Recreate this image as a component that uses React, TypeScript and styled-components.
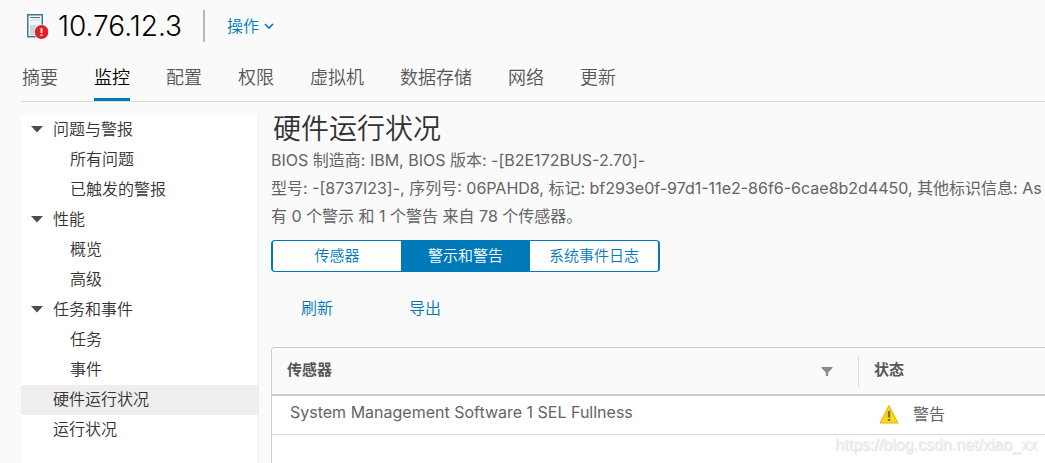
import React from "react";
import styled, { createGlobalStyle } from "styled-components";

const GlobalStyle = createGlobalStyle`
  * { box-sizing: border-box; }
  html, body { margin: 0; background: #fafafa; }
  body {
    color: #565656;
    font-family: Inter, "Noto Sans CJK SC", sans-serif;
    font-weight: 350;
    font-size: 16px;
    line-height: 24px;
    overflow: hidden;
  }
  button { font: inherit; cursor: pointer; }
`;

const Page = styled.div`
  position: relative;
  display: flex;
  flex-direction: column;
  height: 100vh;
  overflow: hidden;
  padding-left: 21px;
`;

const Header = styled.header`
  display: flex;
  align-items: center;
  height: 52px;
  padding-left: 5px;
`;

const HostName = styled.h1`
  margin: 0 21px 0 8px;
  color: #000;
  font-size: 28px;
  font-weight: 300;
  line-height: 36px;
`;

const ActionsButton = styled.button`
  display: flex;
  align-items: center;
  gap: 5px;
  height: 32px;
  padding: 0 0 0 22px;
  border: 0;
  border-left: 2px solid #b8b8b8;
  background: none;
  color: #0079b8;
`;

const TabBar = styled.nav`
  display: flex;
  flex-shrink: 0;
  gap: 36px;
  height: 50px;
  padding-left: 1px;
  border-bottom: 1px solid #dcdcdc;
`;

const Tab = styled.a<{ $active?: boolean }>`
  padding-top: 14px;
  color: ${(p) => (p.$active ? "#000" : "#565656")};
  box-shadow: ${(p) => (p.$active ? "inset 0 -3px #0079b8" : "none")};
  font-size: 18px;
  text-decoration: none;
  white-space: nowrap;
`;

const Body = styled.div`
  display: flex;
  flex: 1;
  min-height: 0;
  padding-top: 13px;
`;

const Sidebar = styled.nav`
  flex: 0 0 238px;
  border-right: 1px solid #eee;
  background: #fff;
`;

const List = styled.ul`
  margin: 0;
  padding: 0;
  list-style: none;
`;

const NavLink = styled.a<{ $level: number; $active?: boolean }>`
  display: flex;
  align-items: center;
  height: 30px;
  padding-bottom: 2px;
  padding-left: ${(p) => (p.$level === 2 ? 49 : 32)}px;
  background: ${(p) => (p.$active ? "#eee" : "none")};
  color: #333;
  text-decoration: none;
`;

const GroupToggle = styled.button`
  display: flex;
  align-items: center;
  gap: 10px;
  width: 100%;
  height: 30px;
  padding: 0 0 2px 10px;
  border: 0;
  background: none;
  color: #333;
`;

const Main = styled.main`
  display: flex;
  flex: 1;
  flex-direction: column;
  min-width: 0;
  padding-left: 12px;
`;

const Title = styled.h2`
  margin: 0 0 3px 2px;
  color: #313131;
  font-size: 28px;
  font-weight: 350;
  line-height: 28px;
`;

const Info = styled.p`
  margin: 0;
  color: #646464;
  font-size: 16px;
  font-weight: 400;
  line-height: 28px;
  white-space: nowrap;
`;

const Segments = styled.div`
  display: flex;
  flex-shrink: 0;
  width: 389px;
  height: 32px;
  margin-top: 10px;
  overflow: hidden;
  border: 1px solid #0079b8;
  border-width: 1px 2px;
  border-radius: 4px;
`;

const Segment = styled.button<{ $active?: boolean }>`
  flex: ${(p) => (p.$active ? "0 0 129px" : "1")};
  padding: 0;
  border: 0;
  background: ${(p) => (p.$active ? "#0079b8" : "#fff")};
  color: ${(p) => (p.$active ? "#fff" : "#0079b8")};
  font-size: 15px;
`;

const Toolbar = styled.div`
  display: flex;
  gap: 16px;
  padding: 24px 0 27px;
`;

const ToolButton = styled.button`
  padding: 0 30px;
  border: 0;
  background: none;
  color: #0079b8;
`;

const Grid = styled.div`
  flex: 1;
  border: 1px solid #ccc;
  border-width: 1px 0 0 1px;
  border-radius: 4px 0 0 0;
  background: #fff;
  overflow: hidden;
`;

const Table = styled.table`
  width: 100%;
  border-collapse: collapse;
  table-layout: fixed;
`;

const HeadCell = styled.th`
  height: 47px;
  padding: 0;
  border-bottom: 2px solid #ccc;
  background: #fafafa;
  font-size: 15px;
  font-weight: 700;
  text-align: left;

  &:first-child { width: 587px; }
`;

const HeadContent = styled.div<{ $divided?: boolean }>`
  display: flex;
  align-items: center;
  justify-content: space-between;
  height: 31px;
  padding: 0 25px 2px 15px;
  border-right: ${(p) => (p.$divided ? "1px solid #dcdcdc" : "0")};
`;

const FilterButton = styled.button`
  display: flex;
  padding: 3px 0 0;
  border: 0;
  background: none;
`;

const Cell = styled.td`
  height: 39px;
  padding: 0 18px 5px;
  border-bottom: 1px solid #dcdcdc;
  color: #646464;
  font-weight: 400;
`;

const Status = styled.span`
  display: flex;
  align-items: center;
  gap: 14px;
  padding: 3px 0 0 2px;
`;

const Watermark = styled.span`
  position: absolute;
  right: 8px;
  bottom: 6px;
  color: #f0f0f0;
  font-family: "Liberation Sans", sans-serif;
  font-size: 16px;
  font-weight: 400;
  line-height: 24px;
  text-shadow: 1px 1px 1px #dcdcdc;
`;

const HostIcon = () => (
  <svg width="24" height="28" viewBox="0 0 24 28" aria-hidden="true">
    <rect x="1.75" y="2.75" width="14.5" height="22" fill="#f3f7f8" stroke="#46788a" strokeWidth="1.5" />
    <path d="M4 5.5h10" stroke="#46788a" strokeWidth="1" />
    <path d="M4 8h10" stroke="#c9d9df" strokeWidth="1" />
    <path d="M4 13h6v10.500H4z" fill="#c9d9df" />
    <circle cx="15.5" cy="20" r="7.6" fill="#fff" />
    <circle cx="15.5" cy="20" r="6.9" fill="#e61e27" />
    <path d="M15.5 16v5M15.5 22.300v1.700" stroke="#fff" strokeWidth="1.8" />
  </svg>
);

const Chevron = () => (
  <svg width="10" height="8" viewBox="0 0 10 8" fill="none" aria-hidden="true">
    <path d="M1 2l4 4 4-4" stroke="#0079b8" strokeWidth="1.6" />
  </svg>
);

const Caret = () => (
  <svg width="12" height="8" viewBox="0 0 12 8" aria-hidden="true">
    <path d="M0 1h12L6 7.5z" fill="#4c4c4c" />
  </svg>
);

const FilterIcon = () => (
  <svg width="12" height="11" viewBox="0 0 12 11" aria-hidden="true">
    <path d="M0.5 1h11v1L7.200 6.5V10H4.800V6.500L0.5 2z" fill="#8c8c8c" />
  </svg>
);

const WarningIcon = () => (
  <svg width="20" height="20" viewBox="0 0 20 20" aria-hidden="true">
    <path d="M10 1.5L19 19H1z" fill="#fcdb0b" stroke="#dcae20" strokeWidth="1" strokeLinejoin="round" />
    <path d="M10 7v6.500M10 15v2" stroke="#756f5c" strokeWidth="2.4" />
  </svg>
);

const tabs = ["摘要", "监控", "配置", "权限", "虚拟机", "数据存储", "网络", "更新"];

const groups = [
  { name: "问题与警报", items: ["所有问题", "已触发的警报"] },
  { name: "性能", items: ["概览", "高级"] },
  { name: "任务和事件", items: ["任务", "事件"] },
];

export default function App() {
  return (
    <Page>
      <GlobalStyle />
      <Header>
        <HostIcon />
        <HostName>10.76.12.3</HostName>
        <ActionsButton>
          操作
          <Chevron />
        </ActionsButton>
      </Header>
      <TabBar>
        {tabs.map((t) => (
          <Tab key={t} href="#" $active={t === "监控"}>
            {t}
          </Tab>
        ))}
      </TabBar>
      <Body>
        <Sidebar>
          <List>
            {groups.map((g) => (
              <li key={g.name}>
                <GroupToggle aria-expanded="true">
                  <Caret />
                  {g.name}
                </GroupToggle>
                <List>
                  {g.items.map((item) => (
                    <li key={item}>
                      <NavLink href="#" $level={2}>
                        {item}
                      </NavLink>
                    </li>
                  ))}
                </List>
              </li>
            ))}
            <li>
              <NavLink href="#" $level={1} $active>
                硬件运行状况
              </NavLink>
            </li>
            <li>
              <NavLink href="#" $level={1}>
                运行状况
              </NavLink>
            </li>
          </List>
        </Sidebar>
        <Main>
          <Title>硬件运行状况</Title>
          <Info>BIOS 制造商: IBM, BIOS 版本: -[B2E172BUS-2.70]-</Info>
          <Info>
            型号: -[8737I23]-, 序列号: 06PAHD8, 标记: bf293e0f-97d1-11e2-86f6-6cae8b2d4450, 其他标识信息: As
          </Info>
          <Info>有 0 个警示 和 1 个警告 来自 78 个传感器。</Info>
          <Segments>
            <Segment>传感器</Segment>
            <Segment $active>警示和警告</Segment>
            <Segment>系统事件日志</Segment>
          </Segments>
          <Toolbar>
            <ToolButton>刷新</ToolButton>
            <ToolButton>导出</ToolButton>
          </Toolbar>
          <Grid>
            <Table>
              <thead>
                <tr>
                  <HeadCell>
                    <HeadContent $divided>
                      传感器
                      <FilterButton aria-label="筛选">
                        <FilterIcon />
                      </FilterButton>
                    </HeadContent>
                  </HeadCell>
                  <HeadCell>
                    <HeadContent>状态</HeadContent>
                  </HeadCell>
                </tr>
              </thead>
              <tbody>
                <tr>
                  <Cell>System Management Software 1 SEL Fullness</Cell>
                  <Cell>
                    <Status>
                      <WarningIcon />
                      警告
                    </Status>
                  </Cell>
                </tr>
              </tbody>
            </Table>
          </Grid>
        </Main>
      </Body>
      <Watermark>https://blog.csdn.net/xiao_xx</Watermark>
    </Page>
  );
}
